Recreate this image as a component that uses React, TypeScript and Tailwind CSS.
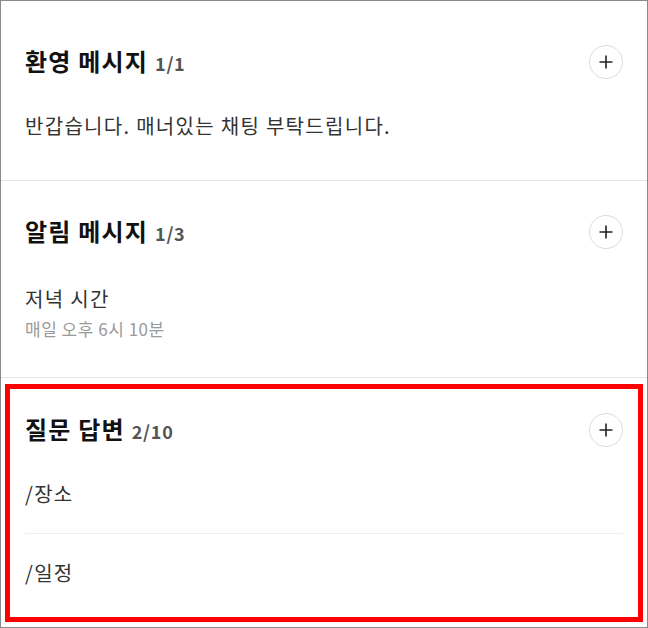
import React from "react";

const font = { fontFamily: '"Noto Sans CJK KR", "Noto Sans", sans-serif' };

function PlusButton() {
  return (
    <button
      type="button"
      className="flex h-[34px] w-[34px] shrink-0 items-center justify-center rounded-full border border-[#dcdcdc] bg-white"
    >
      <svg width="14" height="14" viewBox="0 0 14 14" fill="none">
        <path d="M7 0.5V13.5M0.5 7H13.5" stroke="#222" strokeWidth="1.6" />
      </svg>
    </button>
  );
}

function Header({ title, count }: { title: string; count: string }) {
  return (
    <div className="flex h-[34px] items-center justify-between">
      <div className="flex items-baseline">
        <span className="text-[24px] font-bold leading-[34px] tracking-[0.05em] text-[#111]">{title}</span>
        <span className="ml-[7px] text-[18px] font-bold leading-[34px] tracking-[0.04em] text-[#555]">{count}</span>
      </div>
      <PlusButton />
    </div>
  );
}

export default function App() {
  return (
    <div
      style={font}
      className="flex h-[628px] w-[648px] flex-col border border-[#8a8a8a] bg-white"
    >
      <section className="border-b border-[#e6e6e6] px-6 pb-[39px] pt-[44px]">
        <Header title="환영 메시지" count="1/1" />
        <p className="mt-[32px] text-[20px] leading-[30px] tracking-[0.065em] text-[#333]">
          반갑습니다. 매너있는 채팅 부탁드립니다.
        </p>
      </section>

      <section className="border-b border-[#e6e6e6] px-6 pb-[36px] pt-[34px]">
        <Header title="알림 메시지" count="1/3" />
        <p className="mt-[36px] text-[20px] leading-[28px] tracking-[0.065em] text-[#333]">저녁 시간</p>
        <p className="mt-[4px] text-[17px] leading-[24px] tracking-[0.03em] text-[#9a9a9a]">매일 오후 6시 10분</p>
      </section>

      <section className="flex-1 px-[4px] pb-[5px] pt-[6px]">
        <div className="h-full border-[5px] border-[#ff0000] px-[15px] pb-[5px] pt-[24px]">
          <Header title="질문 답변" count="2/10" />
          <div className="mt-[8px]">
            <div className="flex h-[79px] items-center border-b border-[#efefef] text-[20px] tracking-[0.065em] text-[#333]">
              /장소
            </div>
            <div className="flex h-[78px] items-center text-[20px] tracking-[0.065em] text-[#333]">/일정</div>
          </div>
        </div>
      </section>
    </div>
  );
}
